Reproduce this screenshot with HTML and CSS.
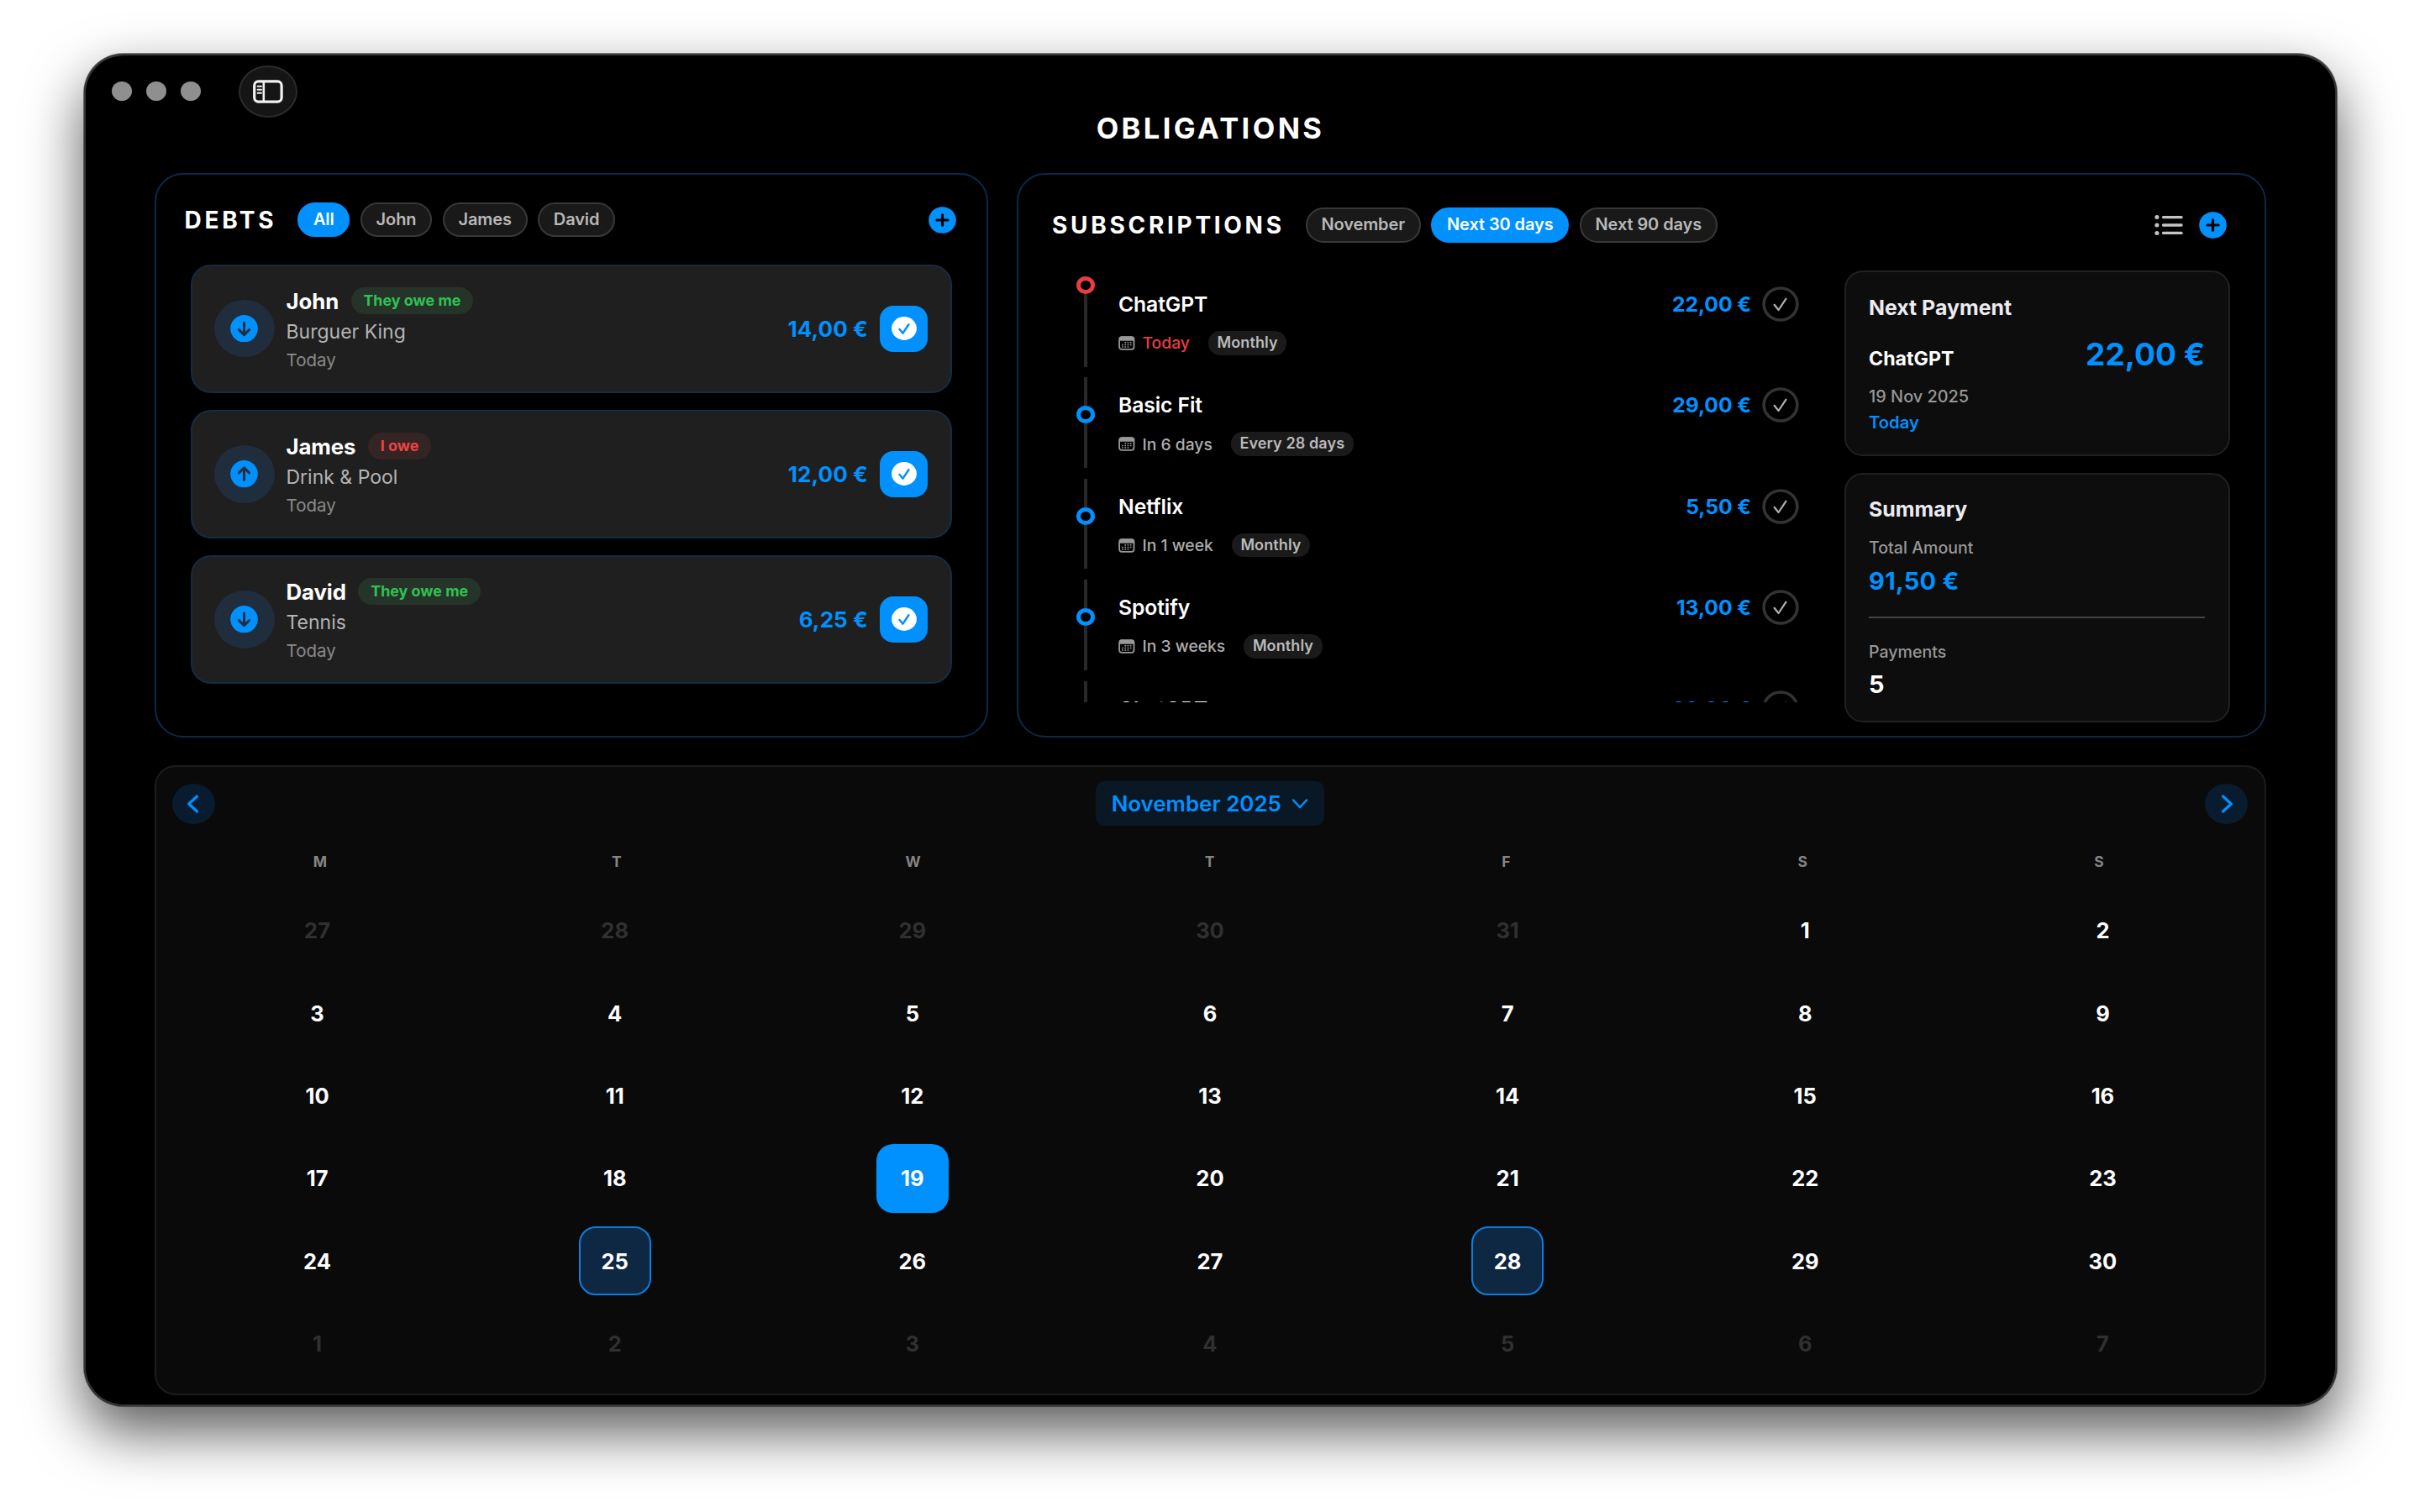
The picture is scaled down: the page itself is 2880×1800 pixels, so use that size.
FILE: index.html
```html
<!DOCTYPE html>
<html lang="en">
<head>
<meta charset="utf-8">
<title>Obligations</title>
<link rel="stylesheet" href="styles.css">
</head>
<body>
<svg class="symbols" aria-hidden="true">
  <symbol id="plus" viewBox="0 0 33 32" preserveAspectRatio="none">
    <ellipse cx="16.5" cy="16" rx="16.3" ry="15.8" fill="#0091ff"/>
    <path d="M16.5 9.8v12.4M10 16h13" stroke="#000" stroke-width="3.2" stroke-linecap="round"/>
  </symbol>
  <symbol id="down" viewBox="0 0 33 32" preserveAspectRatio="none">
    <ellipse cx="16.5" cy="16" rx="16.3" ry="15.9" fill="#0091ff"/>
    <path d="M16.5 9v14M10.4 17.4l6.1 5.8 6.1-5.8" fill="none" stroke="#1f2d3d" stroke-width="3" stroke-linecap="round" stroke-linejoin="round"/>
  </symbol>
  <symbol id="up" viewBox="0 0 33 32" preserveAspectRatio="none">
    <ellipse cx="16.5" cy="16" rx="16.3" ry="15.9" fill="#0091ff"/>
    <path d="M16.5 23V9M10.4 14.6l6.1-5.8 6.1 5.8" fill="none" stroke="#1f2d3d" stroke-width="3" stroke-linecap="round" stroke-linejoin="round"/>
  </symbol>
  <symbol id="done" viewBox="0 0 30 28" preserveAspectRatio="none">
    <ellipse cx="15" cy="14" rx="14.9" ry="13.9" fill="#fff"/>
    <path d="M9.6 15l3.9 4.6 6.9-10.4" fill="none" stroke="#0091ff" stroke-width="2.5" stroke-linecap="round" stroke-linejoin="round"/>
  </symbol>
  <symbol id="tick" viewBox="0 0 44 42" preserveAspectRatio="none">
    <ellipse cx="22" cy="21" rx="19.9" ry="19" fill="none" stroke="#333" stroke-width="3.6"/>
    <path d="M14.6 21.8l5 6.2 8.9-13.4" fill="none" stroke="#b0b0b0" stroke-width="2.2" stroke-linecap="round" stroke-linejoin="round"/>
  </symbol>
  <symbol id="cal" viewBox="0 0 20 17">
    <rect x="1.1" y="1.1" width="17.4" height="14.8" rx="2.8" fill="none" stroke="#989898" stroke-width="1.8"/>
    <path d="M1 4.200Q1 .6 4 .6h11.600q3 0 3 2.900v2.200H1z" fill="#989898"/>
    <path d="M7.400 7.800h8.200M4.200 10.400h11.800M4.200 13h8.500" stroke="#989898" stroke-width="1.500" stroke-dasharray="1.700 1.500"/>
  </symbol>
</svg>

<main class="window">
  <header class="titlebar">
    <span class="light"></span><span class="light"></span><span class="light"></span>
    <button class="toggle" aria-label="Toggle sidebar">
      <svg width="38" height="30" viewBox="0 0 38 30" fill="none" stroke="#f2f2f2">
        <rect x="2.700" y="2.900" width="32.400" height="24.200" rx="4.800" stroke-width="3.200"/>
        <path d="M13.800 3v24" stroke-width="2.600"/>
        <path d="M6.600 8.800h4.400M6.600 12.800h4.400M6.600 16.800h4.400" stroke-width="1.900" stroke-linecap="round"/>
      </svg>
    </button>
  </header>
  <h1 class="page-title">OBLIGATIONS</h1>

  <div class="panels">
    <section class="panel debts">
      <div class="panel-head">
        <h2>DEBTS</h2>
        <div class="pills"><span class="pill active">All</span><span class="pill">John</span><span class="pill">James</span><span class="pill">David</span></div>
        <svg class="plus"><use href="#plus"/></svg>
      </div>
      <article class="debt">
        <span class="arrow"><svg><use href="#down"/></svg></span>
        <div class="who">
          <div class="name">John<span class="badge in">They owe me</span></div>
          <div class="what">Burguer King</div>
          <div class="when">Today</div>
        </div>
        <span class="amount">14,00 €</span>
        <span class="settle"><svg><use href="#done"/></svg></span>
      </article>
      <article class="debt">
        <span class="arrow"><svg><use href="#up"/></svg></span>
        <div class="who">
          <div class="name">James<span class="badge out">I owe</span></div>
          <div class="what">Drink &amp; Pool</div>
          <div class="when">Today</div>
        </div>
        <span class="amount">12,00 €</span>
        <span class="settle"><svg><use href="#done"/></svg></span>
      </article>
      <article class="debt">
        <span class="arrow"><svg><use href="#down"/></svg></span>
        <div class="who">
          <div class="name">David<span class="badge in">They owe me</span></div>
          <div class="what">Tennis</div>
          <div class="when">Today</div>
        </div>
        <span class="amount">6,25 €</span>
        <span class="settle"><svg><use href="#done"/></svg></span>
      </article>
    </section>

    <section class="panel subs">
      <div class="panel-head">
        <h2>SUBSCRIPTIONS</h2>
        <div class="pills"><span class="pill">November</span><span class="pill active">Next 30 days</span><span class="pill">Next 90 days</span></div>
        <svg class="list-icon" viewBox="0 0 34 26" stroke="#c4c4c4" fill="#c4c4c4">
          <path d="M10.500 3.600h21.600M10.500 13h21.600M10.500 22.400h21.600" stroke-width="3.300" stroke-linecap="round"/>
          <g stroke="none"><circle cx="2.900" cy="3.600" r="2.500"/><circle cx="2.900" cy="13" r="2.500"/><circle cx="2.900" cy="22.400" r="2.500"/></g>
        </svg>
        <svg class="plus"><use href="#plus"/></svg>
      </div>
      <div class="subs-body">
        <div class="timeline">
          <div class="sub due">
            <span class="rail"><i class="dot"></i></span>
            <div class="info">
              <div class="title">ChatGPT</div>
              <div class="meta"><svg><use href="#cal"/></svg><span class="date">Today</span><span class="freq">Monthly</span></div>
            </div>
            <span class="price">22,00 €</span><svg class="tick"><use href="#tick"/></svg>
          </div>
          <div class="sub">
            <span class="rail"><i class="dot"></i></span>
            <div class="info">
              <div class="title">Basic Fit</div>
              <div class="meta"><svg><use href="#cal"/></svg><span class="date">In 6 days</span><span class="freq">Every 28 days</span></div>
            </div>
            <span class="price">29,00 €</span><svg class="tick"><use href="#tick"/></svg>
          </div>
          <div class="sub">
            <span class="rail"><i class="dot"></i></span>
            <div class="info">
              <div class="title">Netflix</div>
              <div class="meta"><svg><use href="#cal"/></svg><span class="date">In 1 week</span><span class="freq">Monthly</span></div>
            </div>
            <span class="price">5,50 €</span><svg class="tick"><use href="#tick"/></svg>
          </div>
          <div class="sub">
            <span class="rail"><i class="dot"></i></span>
            <div class="info">
              <div class="title">Spotify</div>
              <div class="meta"><svg><use href="#cal"/></svg><span class="date">In 3 weeks</span><span class="freq">Monthly</span></div>
            </div>
            <span class="price">13,00 €</span><svg class="tick"><use href="#tick"/></svg>
          </div>
          <div class="sub">
            <span class="rail"><i class="dot"></i></span>
            <div class="info">
              <div class="title">ChatGPT</div>
            </div>
            <span class="price">22,00 €</span><svg class="tick"><use href="#tick"/></svg>
          </div>
        </div>
        <aside class="side">
          <div class="card next">
            <h3>Next Payment</h3>
            <div class="next-row"><span class="next-name">ChatGPT</span><span class="next-price">22,00 €</span></div>
            <div class="next-date">19 Nov 2025</div>
            <div class="next-when">Today</div>
          </div>
          <div class="card summary">
            <h3>Summary</h3>
            <div class="label">Total Amount</div>
            <div class="total">91,50 €</div>
            <div class="rule"></div>
            <div class="label">Payments</div>
            <div class="count">5</div>
          </div>
        </aside>
      </div>
    </section>
  </div>

  <section class="calendar">
    <div class="cal-head">
      <button class="nav" aria-label="Previous month"><svg class="chev" viewBox="0 0 16 24"><path d="M12.500 3L2.700 12l9.800 9"/></svg></button>
      <button class="month">November 2025<svg class="caret" viewBox="0 0 20 14"><path d="M2 2.500l8 8.500 8-8.500"/></svg></button>
      <button class="nav" aria-label="Next month"><svg class="chev" viewBox="0 0 16 24"><path d="M3.500 3l9.800 9-9.800 9"/></svg></button>
    </div>
    <div class="weekdays"><span>M</span><span>T</span><span>W</span><span>T</span><span>F</span><span>S</span><span>S</span></div>
    <div class="days">
      <span class="day off">27</span><span class="day off">28</span><span class="day off">29</span><span class="day off">30</span><span class="day off">31</span><span class="day">1</span><span class="day">2</span>
      <span class="day">3</span><span class="day">4</span><span class="day">5</span><span class="day">6</span><span class="day">7</span><span class="day">8</span><span class="day">9</span>
      <span class="day">10</span><span class="day">11</span><span class="day">12</span><span class="day">13</span><span class="day">14</span><span class="day">15</span><span class="day">16</span>
      <span class="day">17</span><span class="day">18</span><span class="day today">19</span><span class="day">20</span><span class="day">21</span><span class="day">22</span><span class="day">23</span>
      <span class="day">24</span><span class="day event">25</span><span class="day">26</span><span class="day">27</span><span class="day event">28</span><span class="day">29</span><span class="day">30</span>
      <span class="day off">1</span><span class="day off">2</span><span class="day off">3</span><span class="day off">4</span><span class="day off">5</span><span class="day off">6</span><span class="day off">7</span>
    </div>
  </section>
</main>
</body>
</html>
```
FILE: styles.css
```css
* { box-sizing: border-box; margin: 0; padding: 0; }

body {
  width: 2880px;
  height: 1800px;
  overflow: hidden;
  padding: 64px 99px 0 100px;
  background: #fff;
  color: #fff;
  font-family: Inter, "Liberation Sans", sans-serif;
  font-size: 20px;
  white-space: nowrap;
}

button { border: 0; font: inherit; color: inherit; }
.symbols { position: absolute; width: 0; height: 0; }

/* Window */
.window {
  display: flex;
  flex-direction: column;
  height: 1610px;
  padding: 0 84px;
  background: #000;
  border-radius: 47px;
  box-shadow:
    inset 0 0 0 2px #363636,
    inset 0 2px 1px #5c5c5c,
    0 0 0 1px rgba(0, 0, 0, .45),
    0 30px 68px rgba(0, 0, 0, .66);
}

.titlebar {
  display: flex;
  align-items: center;
  flex: none;
  height: 75px;
  margin-left: -51px;
  padding-top: 14px;
  gap: 16.400px;
}
.light {
  width: 24.400px;
  height: 23.400px;
  border-radius: 50%;
  background: #8f8f8f;
}
.toggle {
  display: grid;
  place-items: center;
  width: 70px;
  height: 62px;
  margin-left: 29px;
  border-radius: 50%;
  border: 2px solid #2b2b2b;
  background: #151515;
}

.page-title {
  flex: none;
  height: 67px;
  padding-top: 1px;
  font-size: 34.500px;
  line-height: 26px;
  font-weight: 750;
  letter-spacing: 3.400px;
  text-align: center;
}

/* Panels */
.panels {
  display: grid;
  grid-template-columns: 992px 1487px;
  gap: 34px;
  flex: none;
  height: 672px;
  margin-bottom: 32.500px;
}
.panel {
  border: 2px solid #0b2a48;
  border-radius: 34px;
}

.panel-head { display: flex; align-items: center; }
.panel-head h2 {
  margin-right: 25px;
  font-size: 28px;
  line-height: 42px;
  font-weight: 720;
  letter-spacing: 3.700px;
}
.pills { display: flex; gap: 12.600px; margin-right: auto; }
.pill {
  padding: 0 16.700px;
  border: 2px solid #383838;
  border-radius: 21px;
  background: #191919;
  color: #b8b8b8;
  font-size: 20px;
  line-height: 37.500px;
  font-weight: 630;
  letter-spacing: -.1px;
}
.pill.active { border-color: #0091ff; background: #0091ff; color: #fff; }
.plus { width: 33px; height: 32px; }

/* Debts */
.debts { padding: 32.500px 41px 0 40.500px; }
.debts .panel-head { margin: 0 -4.500px 32px -7px; }
.debt {
  display: flex;
  align-items: center;
  height: 153.200px;
  margin-bottom: 20px;
  padding: 0 27px 0 26px;
  border: 2px solid #162c41;
  border-radius: 24px;
  background: #1f1f1f;
}
.arrow {
  display: grid;
  place-items: center;
  width: 72px;
  height: 68.500px;
  margin-right: 14px;
  border-radius: 50%;
  background: #1f2d3d;
}
.arrow svg { width: 33px; height: 32.500px; }
.who { flex: 1; padding-top: 1px; }
.name {
  display: flex;
  align-items: center;
  height: 32px;
  gap: 14.500px;
  font-size: 25.800px;
  font-weight: 650;
  letter-spacing: -.1px;
}
.badge {
  padding: 0 14.800px;
  border-radius: 16px;
  font-size: 17.900px;
  line-height: 32px;
  letter-spacing: 0;
}
.badge.in { background: #263328; color: #30c155; }
.badge.out { background: #352424; color: #ee4245; }
.what {
  padding-top: 1px;
  font-size: 23px;
  line-height: 41px;
  font-weight: 420;
  color: #b4b4b4;
}
.when {
  font-size: 20.500px;
  line-height: 25px;
  font-weight: 420;
  color: #8a8a8a;
}
.amount {
  margin-right: 14px;
  color: #0091ff;
  font-size: 26px;
  font-weight: 700;
  letter-spacing: .1px;
}
.settle {
  display: grid;
  place-items: center;
  width: 57px;
  height: 55px;
  border-radius: 16px;
  background: #0091ff;
}
.settle svg { width: 30px; height: 28px; }

/* Subscriptions */
.subs { padding: 39px 41.500px 0 40px; }
.list-icon { width: 34px; height: 26px; margin-right: 19px; }
.subs .plus { margin-right: 4px; }
.subs-body {
  display: flex;
  justify-content: space-between;
  padding-top: 33px;
}
.timeline {
  width: 860px;
  height: 513.500px;
  margin-left: 29px;
  padding-top: 7px;
  overflow: hidden;
}
.sub {
  display: flex;
  align-items: flex-start;
  height: 107.700px;
  margin-bottom: 12.700px;
}
.rail {
  display: flex;
  flex-direction: column;
  align-items: center;
  width: 22px;
  height: 100%;
  margin-right: 28px;
}
.rail::before, .rail::after {
  content: "";
  width: 3.500px;
  background: #292929;
}
.rail::before { height: 34px; }
.rail::after { flex: 1; }
.dot {
  width: 22px;
  height: 21px;
  border: 5.500px solid #0091ff;
  border-radius: 50%;
}
.due .rail::before { display: none; }
.due .dot { border-color: #ea3d42; }
.info { flex: 1; }
.title {
  height: 65px;
  padding-top: 13px;
  font-size: 24.700px;
  line-height: 40px;
  font-weight: 630;
  letter-spacing: -.1px;
}
.meta {
  display: flex;
  align-items: center;
  height: 28.500px;
}
.meta svg { width: 20px; height: 17px; margin-right: 8.500px; }
.date {
  margin-right: 22px;
  font-size: 19.300px;
  font-weight: 450;
  color: #adadad;
}
.due .date { color: #ea3d42; }
.freq {
  padding: 0 10.700px;
  border-radius: 14px;
  background: #1a1a1a;
  color: #bababa;
  font-size: 18px;
  line-height: 28.500px;
  font-weight: 620;
  letter-spacing: .1px;
}
.price {
  margin-right: 13px;
  padding-top: 13px;
  color: #0091ff;
  font-size: 24.700px;
  line-height: 40px;
  font-weight: 700;
  letter-spacing: -.1px;
}
.tick { width: 44px; height: 42px; margin-top: 11.800px; }

.side {
  display: flex;
  flex-direction: column;
  gap: 20px;
  width: 459px;
}
.card {
  padding: 0 27.500px;
  border: 2px solid #212121;
  border-radius: 22px;
  background: #0d0d0d;
}
.card h3 {
  font-size: 24.900px;
  line-height: 36px;
  font-weight: 700;
  color: #ebebf0;
}
.next { height: 221px; padding-top: 24px; }
.next-row {
  display: flex;
  justify-content: space-between;
  align-items: baseline;
  padding-top: 14px;
}
.next-name { font-size: 23.200px; font-weight: 650; }
.next-price {
  color: #0091ff;
  font-size: 37px;
  line-height: 48px;
  font-weight: 720;
}
.next-date {
  padding-top: 11px;
  font-size: 19.900px;
  line-height: 31px;
  font-weight: 530;
  color: #979797;
}
.next-when {
  font-size: 20.200px;
  line-height: 29px;
  font-weight: 600;
  color: #0091ff;
}
.summary { height: 297px; padding-top: 23px; }
.label {
  font-size: 19.600px;
  line-height: 30px;
  font-weight: 540;
  color: #979797;
}
.summary h3 { margin-bottom: 12.500px; }
.total {
  padding-top: 6px;
  font-size: 29px;
  line-height: 38px;
  font-weight: 700;
  letter-spacing: .3px;
  color: #0091ff;
}
.rule {
  height: 2px;
  margin: 23.500px 0 25px;
  background: #434343;
}
.count {
  padding-top: 5px;
  font-size: 29px;
  line-height: 38px;
  font-weight: 700;
}

/* Calendar */
.calendar {
  flex: none;
  height: 750px;
  border: 2px solid #1c1c1c;
  border-radius: 25px;
  background: #0a0a0a;
}
.cal-head {
  display: flex;
  justify-content: space-between;
  align-items: center;
  height: 71px;
  padding: 17px 20px 0 19px;
}
.nav {
  display: grid;
  place-items: center;
  width: 50.500px;
  height: 48px;
  border-radius: 50%;
  background: #091c2f;
}
.chev, .caret {
  fill: none;
  stroke: #0091ff;
  stroke-linecap: round;
  stroke-linejoin: round;
}
.chev { width: 16px; height: 24px; stroke-width: 3.200px; }
.caret { width: 20px; height: 14px; margin-left: 12px; stroke-width: 2.500px; }
.month {
  display: flex;
  align-items: center;
  height: 53.500px;
  padding: 0 19px 0 18.500px;
  border-radius: 10px;
  background: #0a1826;
  color: #0091ff;
  font-size: 25.900px;
  font-weight: 630;
}
.weekdays {
  display: grid;
  grid-template-columns: repeat(7, 1fr);
  padding: 22px 20.500px 13px 18.500px;
  color: #858585;
  font-size: 17.500px;
  line-height: 40px;
  font-weight: 700;
  text-align: center;
}
.days {
  display: grid;
  grid-template-columns: repeat(7, 1fr);
  grid-auto-rows: 98.400px;
  place-items: center;
  padding: 0 15.500px 0 14.500px;
}
.day {
  display: grid;
  place-items: center;
  width: 86px;
  height: 82px;
  border-radius: 20px;
  font-size: 25.500px;
  font-weight: 680;
}
.off { color: #303030; }
.today { background: #0091ff; }
.event { border: 2.500px solid #0b7fe0; background: #0e2742; }
```
